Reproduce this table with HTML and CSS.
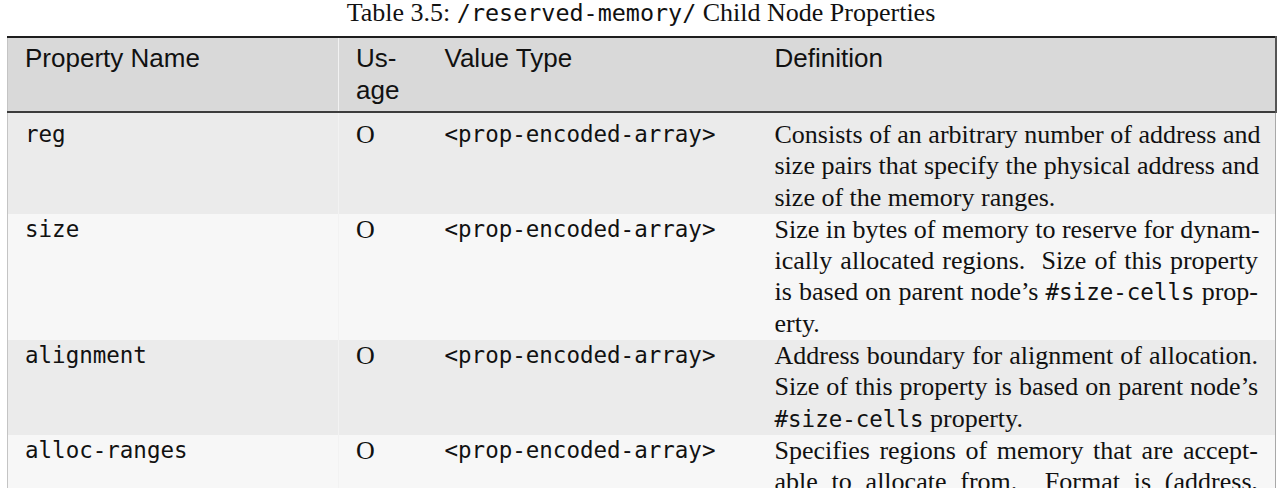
FILE: index.html
```html
<!DOCTYPE html>
<html>
<head>
<meta charset="utf-8">
<link rel="stylesheet" href="styles.css">
</head>
<body>
<div class="page">
  <div class="caption">Table 3.5: <code>/reserved-memory/</code> Child Node Properties</div>
  <table class="props">
    <colgroup>
      <col class="c-name">
      <col class="c-usage">
      <col class="c-type">
      <col class="c-def">
    </colgroup>
    <thead>
      <tr>
        <th class="sep">Property Name</th>
        <th>Us-<br>age</th>
        <th>Value Type</th>
        <th>Definition</th>
      </tr>
    </thead>
    <tbody>
      <tr class="odd first">
        <td class="sep mono">reg</td>
        <td>O</td>
        <td class="mono">&lt;prop-encoded-array&gt;</td>
        <td>
          <span class="j">Consists of an arbitrary number of address and</span>
          <span class="j">size pairs that specify the physical address and</span>
          <span class="l">size of the memory ranges.</span>
        </td>
      </tr>
      <tr class="even">
        <td class="sep mono">size</td>
        <td>O</td>
        <td class="mono">&lt;prop-encoded-array&gt;</td>
        <td>
          <span class="j">Size in bytes of memory to reserve for dynam-</span>
          <span class="j">ically allocated regions.&nbsp; Size of this property</span>
          <span class="j">is based on parent node’s <code>#size-cells</code> prop-</span>
          <span class="l">erty.</span>
        </td>
      </tr>
      <tr class="odd">
        <td class="sep mono">alignment</td>
        <td>O</td>
        <td class="mono">&lt;prop-encoded-array&gt;</td>
        <td>
          <span class="j">Address boundary for alignment of allocation.</span>
          <span class="j">Size of this property is based on parent node’s</span>
          <span class="l"><code>#size-cells</code> property.</span>
        </td>
      </tr>
      <tr class="even">
        <td class="sep mono">alloc-ranges</td>
        <td>O</td>
        <td class="mono">&lt;prop-encoded-array&gt;</td>
        <td>
          <span class="j">Specifies regions of memory that are accept-</span>
          <span class="j">able to allocate from.&nbsp; Format is (address,</span>
        </td>
      </tr>
    </tbody>
  </table>
</div>
</body>
</html>
```

FILE: styles.css
```css
html, body {
  margin: 0;
  padding: 0;
  background: #ffffff;
}

body {
  font-family: "Liberation Serif", "Times New Roman", serif;
  color: #111111;
  overflow: hidden;
}

.page {
  padding-left: 7px;
  width: 1268px;
}

.caption {
  font-size: 26px;
  line-height: 26px;
  height: 26px;
  text-align: center;
  margin-bottom: 10px;
}

.caption code {
  font-size: 23.4px;
}

code {
  font-family: "DejaVu Sans Mono", monospace;
  font-size: 22.5px;
  line-height: 1;
}

.props {
  width: 1268px;
  border-collapse: collapse;
  table-layout: fixed;
  border-left: 1px solid #c4c4c4;
  border-right: 1px solid #a8a8a8;
}

.c-name { width: 331px; }
.c-usage { width: 89px; }
.c-type { width: 330px; }
.c-def { width: 518px; }

.props thead tr {
  border-top: 2px solid #1e1e1e;
  border-bottom: 2px solid #3c3c3c;
  background: #d9d9d9;
}

.props th {
  font-family: "Liberation Sans", Arial, sans-serif;
  font-weight: normal;
  font-size: 26px;
  line-height: 31.5px;
  text-align: left;
  vertical-align: top;
  padding: 5px 17px 5px 17px;
  color: #111;
}

.props thead th:last-child {
  border-right: 2px solid #555;
}

.props td {
  font-size: 26px;
  line-height: 31.3px;
  vertical-align: top;
  padding: 0 17px 1px 17px;
  color: #111;
}

.props tr.first td {
  padding-top: 6px;
}

.props th.sep,
.props td.sep {
  border-right: 1px solid #f2f2f2;
}

.props td.mono {
  font-family: "DejaVu Sans Mono", monospace;
  font-size: 22.5px;
}

.odd { background: #ebebeb; }
.even { background: #f7f7f7; }

.j {
  display: block;
  text-align: justify;
  text-align-last: justify;
  white-space: nowrap;
}

.l {
  display: block;
  text-align: left;
  white-space: nowrap;
}
```
